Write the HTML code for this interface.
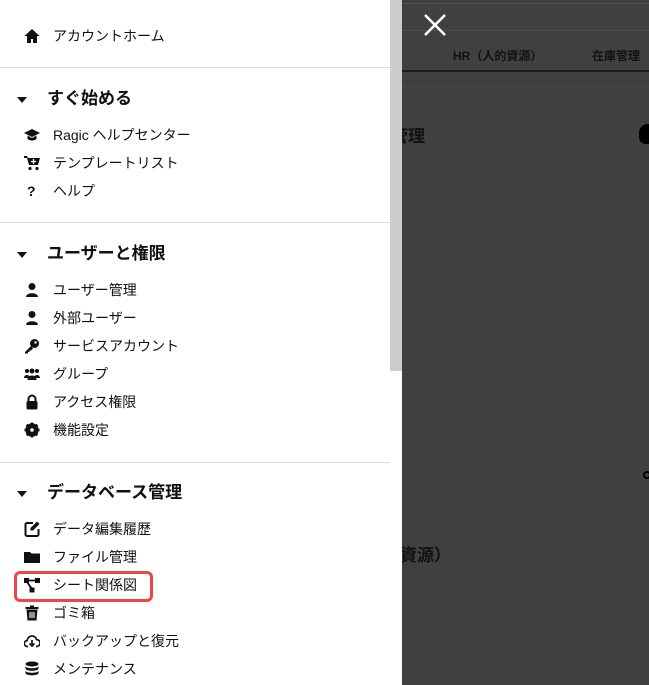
<!DOCTYPE html>
<html><head><meta charset="utf-8"><style>
*{margin:0;padding:0;box-sizing:border-box}
body{width:649px;height:685px;overflow:hidden;position:relative;background:#404040;font-family:"Liberation Sans","Noto Sans CJK JP",sans-serif;color:#111}
#side{position:absolute;left:0;top:0;width:402px;height:685px;background:#fff}
.sb{position:absolute;left:390px;top:0;width:12px;height:371px;background:#cdcdcd}
.hr{position:absolute;left:0;width:390px;height:1px;background:#dcdcdc}
.it{position:absolute;left:53px;font-size:14px;line-height:20px;white-space:nowrap}
.h{position:absolute;left:47px;font-size:17px;font-weight:bold;line-height:22px;white-space:nowrap}
.car{position:absolute;left:17px;width:0;height:0;border-left:5px solid transparent;border-right:5px solid transparent;border-top:6px solid #111}
.ic{position:absolute;left:24px;width:16px;height:16px}
.red{position:absolute;left:14px;top:571px;width:139px;height:31px;border:3px solid #f0444a;border-radius:6px}
.dk{position:absolute;color:#111;white-space:nowrap}
</style></head><body>
<div style="position:absolute;left:402px;top:3px;width:247px;height:1px;background:#505050"></div>
<div style="position:absolute;left:402px;top:30px;width:247px;height:1px;background:#4c4c4c"></div>
<div style="position:absolute;left:402px;top:70px;width:247px;height:2px;background:#1e1e1e"></div>
<div style="position:absolute;left:402px;top:86px;width:247px;height:1px;background:#474747"></div>
<div class="dk" style="left:453px;top:47px;font-size:12px;font-weight:bold">HR（人的資源）</div>
<div class="dk" style="left:592px;top:47px;font-size:12px;font-weight:bold">在庫管理</div>
<div class="dk" style="left:391px;top:122px;font-size:17px;font-weight:bold">管理</div>
<div class="dk" style="left:400px;top:541px;font-size:17px;font-weight:bold">資源）</div>
<div style="position:absolute;left:639px;top:124px;width:14px;height:20px;background:#000;border-radius:9px 0 0 7px"></div>
<div style="position:absolute;left:643px;top:471px;width:8px;height:8px;border:2px solid #000;border-radius:50%"></div>
<svg style="position:absolute;left:423px;top:13px" width="24" height="24"><path d="M2 2L22 22M22 2L2 22" stroke="#fff" stroke-width="2.6"/></svg>

<div id="side">
<div class="sb"></div>
<div class="hr" style="top:67px"></div>
<div class="hr" style="top:222px"></div>
<div class="hr" style="top:462px"></div>

<svg class="ic" style="top:28px" viewBox="0 0 16 16"><path d="M8 1L0.5 8H3v7h4v-4h2v4h4V8h2.5z" fill="#111"/></svg>
<div class="it" style="top:26px">アカウントホーム</div>

<div class="car" style="top:97px"></div><div class="h" style="top:88px">すぐ始める</div>
<svg class="ic" style="top:127px" viewBox="0 0 16 16"><path d="M0 6L8 2l8 4-8 4z M3.5 8.5v3.5c2 2 7 2 9 0V8.5L8 11z" fill="#111"/></svg>
<div class="it" style="top:125px">Ragic ヘルプセンター</div>
<svg class="ic" style="top:155px" viewBox="0 0 16 16"><path d="M0 1h3l1 2h12l-2 7H5L3 3H0z" fill="#111"/><circle cx="6" cy="13.5" r="1.6" fill="#111"/><circle cx="13" cy="13.5" r="1.6" fill="#111"/><path d="M9.5 4v5M7 6.5h5" stroke="#fff" stroke-width="1.3"/></svg>
<div class="it" style="top:153px">テンプレートリスト</div>
<div class="it" style="top:181px;left:27px;font-weight:bold">?</div>
<div class="it" style="top:181px">ヘルプ</div>

<div class="car" style="top:252px"></div><div class="h" style="top:243px">ユーザーと権限</div>
<svg class="ic" style="top:282px" viewBox="0 0 16 16"><circle cx="8" cy="4.5" r="3.5" fill="#111"/><path d="M2 15c0-5 12-5 12 0z" fill="#111"/></svg>
<div class="it" style="top:280px">ユーザー管理</div>
<svg class="ic" style="top:310px" viewBox="0 0 16 16"><circle cx="8" cy="4.5" r="3.5" fill="#111"/><path d="M2 15c0-5 12-5 12 0z" fill="#111"/></svg>
<div class="it" style="top:308px">外部ユーザー</div>
<svg class="ic" style="top:338px" viewBox="0 0 16 16"><circle cx="10.5" cy="5.5" r="4.5" fill="#111"/><path d="M7 8L1 14v1.5h3V14h1.5v-1.5H7l2-2z" fill="#111"/><circle cx="11.5" cy="4.5" r="1.2" fill="#fff"/></svg>
<div class="it" style="top:336px">サービスアカウント</div>
<svg class="ic" style="top:366px" viewBox="0 0 16 16"><circle cx="3" cy="5" r="2" fill="#111"/><circle cx="13" cy="5" r="2" fill="#111"/><circle cx="8" cy="5" r="2.5" fill="#111"/><path d="M0 12c0-4 6-4 6 0zM10 12c0-4 6-4 6 0zM3.5 14c0-6 9-6 9 0z" fill="#111"/></svg>
<div class="it" style="top:364px">グループ</div>
<svg class="ic" style="top:394px" viewBox="0 0 16 16"><path d="M4.5 7V5a3.5 3.5 0 017 0v2" stroke="#111" stroke-width="2" fill="none"/><rect x="2.5" y="7" width="11" height="8.5" rx="1.5" fill="#111"/></svg>
<div class="it" style="top:392px">アクセス権限</div>
<svg class="ic" style="top:422px" viewBox="0 0 16 16"><circle cx="8" cy="8" r="5" fill="none" stroke="#111" stroke-width="3.4"/><path d="M8 0.5v15M0.5 8h15M2.7 2.7l10.6 10.6M13.3 2.7L2.7 13.3" stroke="#111" stroke-width="2.6"/><circle cx="8" cy="8" r="1.8" fill="#fff"/></svg>
<div class="it" style="top:420px">機能設定</div>

<div class="car" style="top:491px"></div><div class="h" style="top:482px">データベース管理</div>
<svg class="ic" style="top:521px" viewBox="0 0 16 16"><path d="M9 2H3a1.5 1.5 0 00-1.5 1.5v10A1.5 1.5 0 003 15h10a1.5 1.5 0 001.5-1.5V8" fill="none" stroke="#111" stroke-width="2"/><path d="M13 0.5l2.5 2.5L9 9.5H6.5V7z" fill="#111"/></svg>
<div class="it" style="top:519px">データ編集履歴</div>
<svg class="ic" style="top:549px" viewBox="0 0 16 16"><path d="M0 3h6l1.5 1.5H16V14H0z" fill="#111"/></svg>
<div class="it" style="top:547px">ファイル管理</div>
<div class="red"></div>
<svg class="ic" style="top:577px" viewBox="0 0 16 16"><rect x="0" y="1" width="5" height="5" fill="#111"/><rect x="11" y="1" width="5" height="5" fill="#111"/><rect x="5.5" y="10.5" width="5" height="5" fill="#111"/><path d="M4 3.5h8M3 5l5 7" stroke="#111" stroke-width="1.8"/></svg>
<div class="it" style="top:575px">シート関係図</div>
<svg class="ic" style="top:605px" viewBox="0 0 16 16"><path d="M1.5 2h13v2h-13zM6 0.5h4V2H6zM2.5 4.5h11L12.5 15.5h-9z" fill="#111"/><path d="M6 7v6M8 7v6M10 7v6" stroke="#fff" stroke-width="1.1"/></svg>
<div class="it" style="top:603px">ゴミ箱</div>
<svg class="ic" style="top:633px" viewBox="0 0 16 16"><path d="M4 13.5H3.5a3 3 0 01-.3-6 4.8 4.8 0 019.4-1 3.5 3.5 0 01-.1 7H12" fill="none" stroke="#111" stroke-width="1.7"/><path d="M8 7v6M5.5 10.5L8 13l2.5-2.5" fill="none" stroke="#111" stroke-width="1.7"/></svg>
<div class="it" style="top:631px">バックアップと復元</div>
<svg class="ic" style="top:661px" viewBox="0 0 16 16"><ellipse cx="8" cy="3" rx="6.5" ry="2.5" fill="#111"/><path d="M1.5 5v2.5c0 3 13 3 13 0V5c0 3-13 3-13 0zM1.5 9.5V12c0 3 13 3 13 0V9.5c0 3-13 3-13 0z" fill="#111"/></svg>
<div class="it" style="top:659px">メンテナンス</div>
</div>
</body></html>
